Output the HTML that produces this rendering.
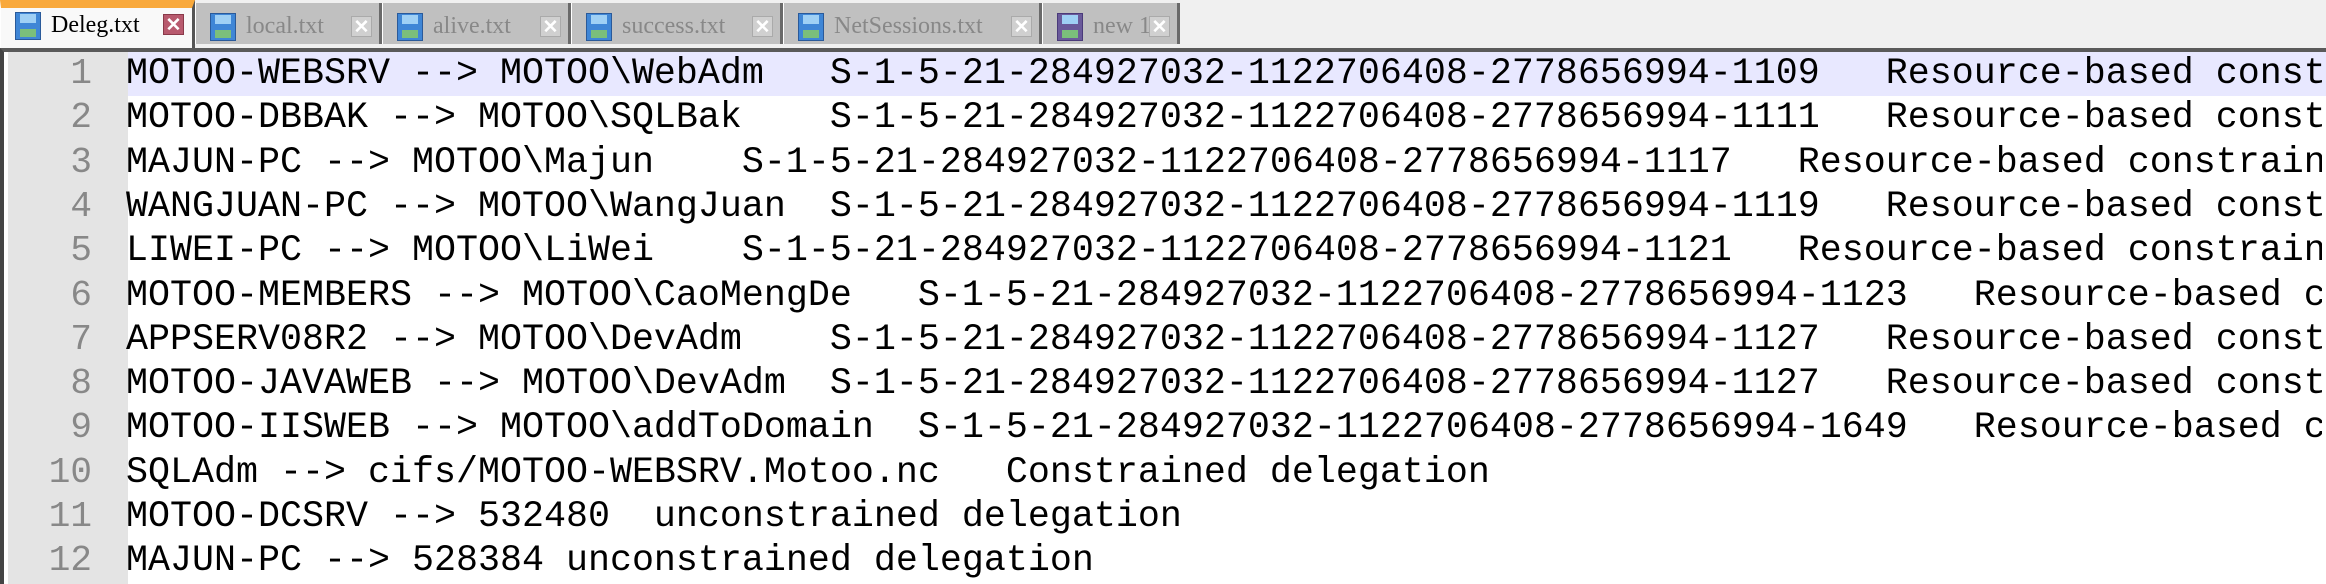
<!DOCTYPE html>
<html><head><meta charset="utf-8"><style>
*{margin:0;padding:0;box-sizing:border-box}
body{width:2326px;height:584px;overflow:hidden;background:#f0f0f0;position:relative;font-family:"Liberation Mono",monospace}
.tab{position:absolute;top:3px;height:41px;background:#c0c0c0;border-right:3px solid #6a6a6a;border-left:1px solid #fff}
.tab.act{top:0;height:48px;background:#f9f9f9;border-top:8px solid #f9a93c;border-right:3px solid #555}
.ic{position:absolute;left:14px;top:10px;width:26px;height:28px;background:#3f86d6;border:1px solid #2a5a9a}
.ic:before{content:"";position:absolute;left:4px;top:1px;width:16px;height:9px;background:#9fd0f5}
.ic:after{content:"";position:absolute;left:4px;bottom:2px;width:16px;height:8px;background:#7bbf7b}
.act .ic{top:4px}
.tl{position:absolute;left:50px;top:10px;font-family:"Liberation Serif","Noto Serif CJK SC",serif;font-size:24px;color:#888;white-space:nowrap}
.act .tl{color:#000;top:4px}
.x{position:absolute;top:13px;width:21px;height:21px;background:#d0d0d0;color:#fff;font:bold 19px/21px "Liberation Sans",sans-serif;text-align:center;border:1px solid #aaa}
.act .x{background:#b85a6e;top:6px;border-color:#8a3a4a}
#ed{position:absolute;left:0;top:48px;width:2326px;height:536px;background:#fff;border-top:4px solid #5a5a5a;border-left:4px solid #444;overflow:hidden}
#g{position:absolute;left:4px;top:0;width:120px;height:100%;background:#e4e4e4}
.ln{position:absolute;left:0;width:84px;text-align:right;color:#888;font-size:36px;height:44.3px;line-height:44.3px}
.l{position:absolute;left:118px;width:2200px;font-size:36.67px;height:44.3px;line-height:44.3px;white-space:pre;color:#000;padding-left:4px;overflow:hidden}
</style></head><body>
<div class="tab act" style="left:0;width:195px"><div class="ic"></div><div class="tl">Deleg.txt</div><div class="x" style="left:162px">✕</div></div>
<div class="tab" style="left:195px;width:187px"><div class="ic"></div><div class="tl">local.txt</div><div class="x" style="left:155px">✕</div></div>
<div class="tab" style="left:382px;width:189px"><div class="ic"></div><div class="tl">alive.txt</div><div class="x" style="left:157px">✕</div></div>
<div class="tab" style="left:571px;width:212px"><div class="ic"></div><div class="tl">success.txt</div><div class="x" style="left:180px">✕</div></div>
<div class="tab" style="left:783px;width:259px"><div class="ic"></div><div class="tl">NetSessions.txt</div><div class="x" style="left:227px">✕</div></div>
<div class="tab" style="left:1042px;width:138px"><div class="ic" style="background:#6a5a9a;border-color:#4a3a7a"></div><div class="tl">new 1</div><div class="x" style="left:106px">✕</div></div>
<div id="ed">
<div style="position:absolute;left:120px;top:0;width:2210px;height:44.3px;background:#e8e8ff"></div>
<div style="position:absolute;left:121px;top:0;width:3px;height:44.3px;background:#8000ff"></div>
<div id="g">
<div class="ln" style="top:0">1</div><div class="ln" style="top:44.3px">2</div><div class="ln" style="top:88.6px">3</div><div class="ln" style="top:132.9px">4</div><div class="ln" style="top:177.2px">5</div><div class="ln" style="top:221.5px">6</div><div class="ln" style="top:265.8px">7</div><div class="ln" style="top:310.1px">8</div><div class="ln" style="top:354.4px">9</div><div class="ln" style="top:398.7px">10</div><div class="ln" style="top:443px">11</div><div class="ln" style="top:487.3px">12</div>
</div>
<div class="l" style="top:0">MOTOO-WEBSRV --> MOTOO\WebAdm   S-1-5-21-284927032-1122706408-2778656994-1109   Resource-based constrained delegation</div>
<div class="l" style="top:44.3px">MOTOO-DBBAK --> MOTOO\SQLBak    S-1-5-21-284927032-1122706408-2778656994-1111   Resource-based constrained delegation</div>
<div class="l" style="top:88.6px">MAJUN-PC --> MOTOO\Majun    S-1-5-21-284927032-1122706408-2778656994-1117   Resource-based constrained delegation</div>
<div class="l" style="top:132.9px">WANGJUAN-PC --> MOTOO\WangJuan  S-1-5-21-284927032-1122706408-2778656994-1119   Resource-based constrained delegation</div>
<div class="l" style="top:177.2px">LIWEI-PC --> MOTOO\LiWei    S-1-5-21-284927032-1122706408-2778656994-1121   Resource-based constrained delegation</div>
<div class="l" style="top:221.5px">MOTOO-MEMBERS --> MOTOO\CaoMengDe   S-1-5-21-284927032-1122706408-2778656994-1123   Resource-based constrained delegation</div>
<div class="l" style="top:265.8px">APPSERV08R2 --> MOTOO\DevAdm    S-1-5-21-284927032-1122706408-2778656994-1127   Resource-based constrained delegation</div>
<div class="l" style="top:310.1px">MOTOO-JAVAWEB --> MOTOO\DevAdm  S-1-5-21-284927032-1122706408-2778656994-1127   Resource-based constrained delegation</div>
<div class="l" style="top:354.4px">MOTOO-IISWEB --> MOTOO\addToDomain  S-1-5-21-284927032-1122706408-2778656994-1649   Resource-based constrained delegation</div>
<div class="l" style="top:398.7px">SQLAdm --> cifs/MOTOO-WEBSRV.Motoo.nc   Constrained delegation</div>
<div class="l" style="top:443px">MOTOO-DCSRV --> 532480  unconstrained delegation</div>
<div class="l" style="top:487.3px">MAJUN-PC --> 528384 unconstrained delegation</div>
</div>
</body></html>
